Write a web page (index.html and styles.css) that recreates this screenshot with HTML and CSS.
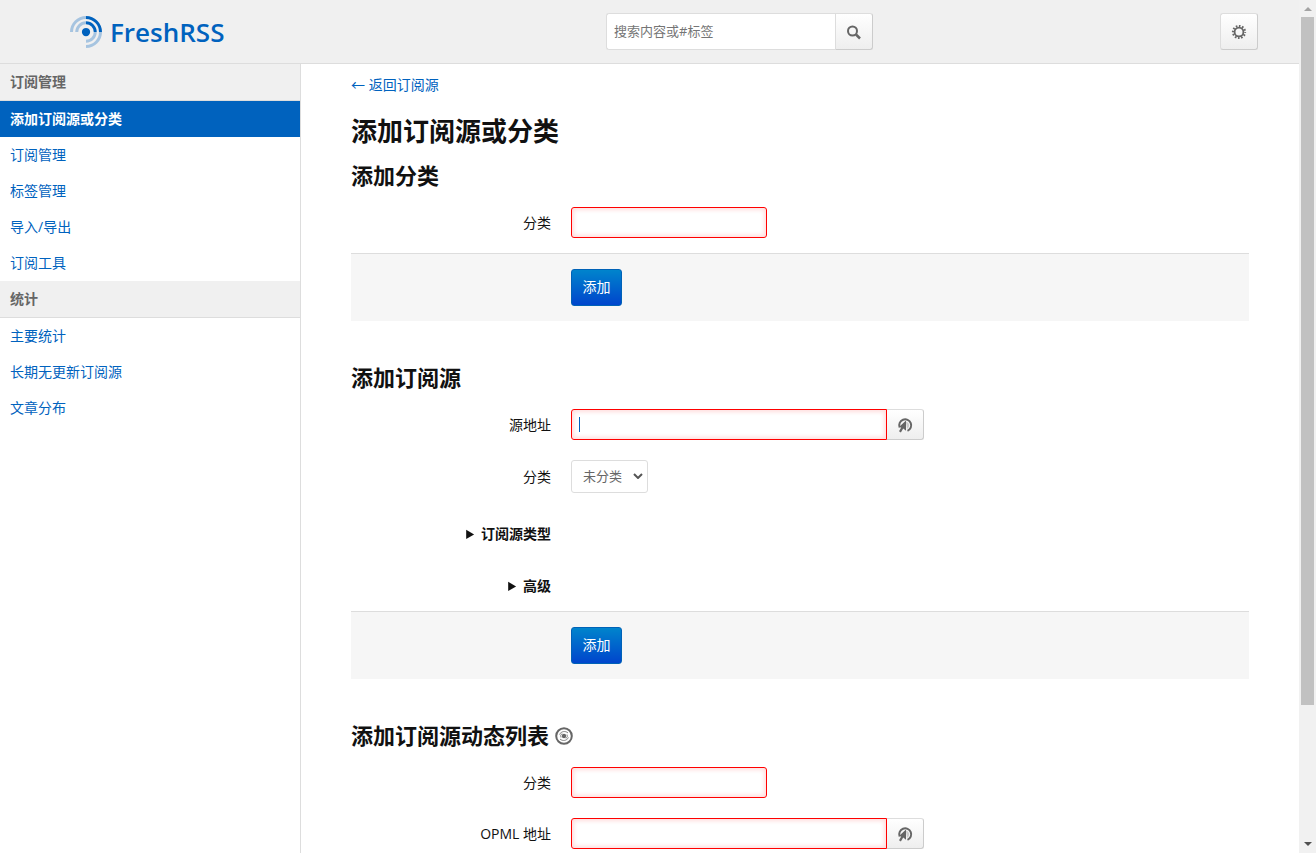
FILE: index.html
```html
<!DOCTYPE html>
<html lang="zh-CN">
<head>
    <meta charset="UTF-8">
    <meta name="viewport" content="width=device-width, initial-scale=1.0">
    <title>添加订阅源或分类 · FreshRSS</title>
    <link rel="stylesheet" href="styles.css">
</head>
<body>
    <div class="page">
        <header class="header">
            <a class="logo" href="#">
                <svg width="32" height="32" viewBox="0 0 256 256" fill="none" stroke="#0062be" stroke-width="24">
                    <circle cx="128" cy="128" r="33" fill="#0062be" stroke="none"/>
                    <g opacity="0.3">
                        <path d="M12 128A116 116 0 0 1 128 12"/>
                        <path d="M54 128A74 74 0 0 1 128 54"/>
                        <path d="M128 244A116 116 0 0 0 244 128"/>
                        <path d="M128 202A74 74 0 0 0 202 128"/>
                    </g>
                    <path d="M128 12A116 116 0 0 1 244 128"/>
                    <path d="M128 54A74 74 0 0 1 202 128"/>
                </svg>
                <span>FreshRSS</span>
            </a>
            <form class="search">
                <input type="search" placeholder="搜索内容或#标签" aria-label="搜索内容或#标签">
                <button type="button" class="btn" aria-label="搜索">
                    <svg width="16" height="16" viewBox="0 0 16 16" fill="none" stroke="#666" stroke-width="2">
                        <circle cx="6.5" cy="7" r="4.5"/>
                        <path d="M10 10.5l4 4" stroke-width="2.5"/>
                    </svg>
                </button>
            </form>
            <div class="configure">
                <button type="button" class="btn" aria-label="设置">
                    <svg width="16" height="16" viewBox="0 0 16 16" fill="none" stroke="#666">
                        <circle cx="8" cy="8" r="4.4" stroke-width="1.800"/>
                        <circle cx="8" cy="8" r="6" stroke-width="2.200" stroke-dasharray="1.600 1.540" stroke-dashoffset="0.800"/>
                    </svg>
                </button>
            </div>
        </header>

        <div class="content">
            <nav class="nav-list">
                <h2 class="nav-header">订阅管理</h2>
                <a class="item active" href="#">添加订阅源或分类</a>
                <a class="item" href="#">订阅管理</a>
                <a class="item" href="#">标签管理</a>
                <a class="item" href="#">导入/导出</a>
                <a class="item" href="#">订阅工具</a>
                <h2 class="nav-header">统计</h2>
                <a class="item" href="#">主要统计</a>
                <a class="item" href="#">长期无更新订阅源</a>
                <a class="item" href="#">文章分布</a>
            </nav>

            <main class="post">
                <a class="back" href="#">← 返回订阅源</a>
                <h1>添加订阅源或分类</h1>

                <h2>添加分类</h2>
                <form>
                    <div class="fields">
                        <div class="form-group">
                            <label for="new-category">分类</label>
                            <input id="new-category" class="invalid" type="text">
                        </div>
                    </div>
                    <div class="form-actions">
                        <button type="button" class="btn btn-important">添加</button>
                    </div>
                </form>

                <h2>添加订阅源</h2>
                <form>
                    <div class="fields">
                        <div class="form-group">
                            <label for="url_rss">源地址</label>
                            <div class="stick">
                                <input id="url_rss" class="invalid long" type="url">
                                <span class="caret"></span>
                                <button type="button" class="btn" aria-label="打开源地址">
                                    <svg width="16" height="16" viewBox="0 0 16 16">
                                        <path d="M2.600 10.500A6 6 0 1 1 10.500 13.900" fill="none" stroke="#666" stroke-width="2"/>
                                        <path d="M9 4.500a4 4 0 0 1 1 7.500z" fill="#ccc"/>
                                        <path d="M9 3.500L2 10l2.200.400L2 14.300l1.900 1.200 2.300-4 2.800 2.300z" fill="#666"/>
                                    </svg>
                                </button>
                            </div>
                        </div>
                        <div class="form-group">
                            <label for="category">分类</label>
                            <div class="select">
                                <select id="category">
                                    <option>未分类</option>
                                </select>
                                <svg width="10" height="6" viewBox="0 0 10 6" fill="none" stroke="#555" stroke-width="2">
                                    <path d="M1 1l4 4 4-4"/>
                                </svg>
                            </div>
                        </div>
                    </div>
                    <div class="details-list">
                        <details>
                            <summary>订阅源类型</summary>
                        </details>
                        <details>
                            <summary>高级</summary>
                        </details>
                    </div>
                    <div class="form-actions">
                        <button type="button" class="btn btn-important">添加</button>
                    </div>
                </form>

                <h2>添加订阅源动态列表
                    <svg width="18" height="18" viewBox="0 0 18 18" fill="none" stroke="#666">
                        <circle cx="9" cy="9" r="7.800" stroke-width="2"/>
                        <circle cx="9" cy="9" r="2.200" fill="#666" stroke="none"/>
                        <path d="M4.500 7.500C6 4.300 10.500 3.500 13 6M13.500 10.500C12 13.700 7.500 14.500 5 12M6 10.500a3.300 3.300 0 0 1 1-4M12 7.500a3.300 3.300 0 0 1-1 4" stroke-width="0.800"/>
                    </svg>
                </h2>
                <form>
                    <div class="fields">
                        <div class="form-group">
                            <label for="opml-category">分类</label>
                            <input id="opml-category" class="invalid" type="text">
                        </div>
                        <div class="form-group">
                            <label for="opml_url">OPML 地址</label>
                            <div class="stick">
                                <input id="opml_url" class="invalid long" type="url">
                                <button type="button" class="btn" aria-label="打开 OPML 地址">
                                    <svg width="16" height="16" viewBox="0 0 16 16">
                                        <path d="M2.600 10.500A6 6 0 1 1 10.500 13.900" fill="none" stroke="#666" stroke-width="2"/>
                                        <path d="M9 4.500a4 4 0 0 1 1 7.500z" fill="#ccc"/>
                                        <path d="M9 3.500L2 10l2.200.400L2 14.300l1.900 1.200 2.300-4 2.800 2.300z" fill="#666"/>
                                    </svg>
                                </button>
                            </div>
                        </div>
                    </div>
                </form>
            </main>
        </div>
    </div>

    <div class="scrollbar" aria-hidden="true">
        <svg width="17" height="17" viewBox="0 0 17 17"><path d="M5 11l4-4 4 4z" fill="#a3a3a3"/></svg>
        <div class="track"><div class="thumb"></div></div>
        <svg width="17" height="17" viewBox="0 0 17 17"><path d="M5 6l4 4 4-4z" fill="#505050"/></svg>
    </div>
</body>
</html>
```

FILE: styles.css
```css
* {
    box-sizing: border-box;
}

body {
    display: flex;
    height: 100vh;
    margin: 0;
    overflow: hidden;
    background-color: #fff;
    color: #111;
    font-family: "Open Sans", "Noto Sans CJK SC", sans-serif;
    font-size: 14px;
}

a {
    color: #0062be;
    text-decoration: none;
}

input,
select,
button {
    font-family: inherit;
    font-size: 14px;
}

.page {
    display: flex;
    flex-direction: column;
    flex: 1;
    min-width: 0;
}

/* Header */
.header {
    display: grid;
    grid-template-columns: 300px 1fr 120px;
    align-items: center;
    flex-shrink: 0;
    height: 64px;
    background-color: #f0f0f0;
    border-bottom: 1px solid #ddd;
}

.logo {
    display: flex;
    align-items: center;
    gap: 8px;
    padding-left: 70px;
    font-size: 26px;
    font-weight: 600;
    line-height: 32px;
}

.search {
    display: flex;
    justify-content: center;
}

.search input {
    width: 229px;
    height: 37px;
    padding: 0 7px 2px;
    border: 1px solid #ddd;
    border-right: 0;
    border-radius: 3px 0 0 3px;
    background-color: #fff;
    font-size: 13px;
}

.search input::placeholder {
    color: #757575;
}

.configure {
    text-align: center;
}

/* Buttons */
.btn {
    display: inline-flex;
    align-items: center;
    justify-content: center;
    min-width: 38px;
    height: 37px;
    padding: 0 10px;
    border: 1px solid #ddd;
    border-color: #ddd #ccc #ccc #ddd;
    border-radius: 3px;
    background: linear-gradient(#fff, #eee);
    vertical-align: middle;
}

.search .btn {
    border-radius: 0 3px 3px 0;
}

.btn-important {
    min-width: 51px;
    padding-bottom: 3px;
    border-color: #0062b7;
    background: linear-gradient(#0084cc, #0045cc);
    color: #fff;
}

/* Sidebar */
.content {
    display: flex;
    flex: 1;
    min-height: 0;
}

.nav-list {
    flex: 0 0 301px;
    border-right: 1px solid #ddd;
}

.nav-header,
.nav-list .item {
    display: block;
    margin: 0;
    padding: 0 10px;
    font-size: 14px;
    line-height: 36px;
}

.nav-header {
    background-color: #f0f0f0;
    border-bottom: 1px solid #ddd;
    color: #666;
    font-weight: 700;
}

.nav-list .active {
    background-color: #0062be;
    color: #fff;
    font-weight: 700;
}

/* Main column */
.post {
    flex: 1;
    min-width: 0;
    padding: 9px 50px 0;
    overflow: hidden;
}

.back {
    display: block;
    line-height: 24px;
}

h1 {
    margin: 16px 0 9px;
    font-size: 26px;
    line-height: 36px;
}

.post h2 {
    margin: 0 0 15px;
    font-size: 22px;
    line-height: 34px;
}

.post h2 svg {
    vertical-align: -1px;
}

/* Forms */
.fields {
    display: grid;
    gap: 20px;
    padding-bottom: 15px;
}

.form-group {
    display: flex;
    align-items: center;
    gap: 20px;
}

.form-group label {
    width: 200px;
    padding-bottom: 2px;
    text-align: right;
}

.invalid {
    width: 196px;
    height: 31px;
    padding: 0 7px;
    border: 1px solid #f00;
    border-radius: 3px;
    box-shadow: 0 0 4px 2px #fdd inset;
}

.stick {
    display: flex;
    position: relative;
}

.stick .long {
    width: 316px;
    border-radius: 3px 0 0 3px;
}

.stick .btn {
    width: 37px;
    min-width: 0;
    height: 31px;
    border-left: 0;
    border-radius: 0 3px 3px 0;
}

.caret {
    position: absolute;
    top: 8px;
    left: 8px;
    width: 1px;
    height: 15px;
    background-color: #0062be;
}

.select {
    position: relative;
}

.select select {
    appearance: none;
    width: 77px;
    height: 33px;
    padding: 0 11px 2px;
    border: 1px solid #ddd;
    border-radius: 3px;
    background-color: #fff;
    color: #666;
    font-size: 13px;
}

.select svg {
    position: absolute;
    top: 13px;
    right: 5px;
    pointer-events: none;
}

.details-list {
    display: grid;
    gap: 20px;
    padding: 10px 0 9px;
}

summary {
    width: 200px;
    font-weight: 700;
    line-height: 32px;
    text-align: right;
}

.form-actions {
    margin-bottom: 39px;
    padding: 15px 0 15px 220px;
    border-top: 1px solid #ddd;
    background-color: #f6f6f6;
}

.form-actions .btn {
    display: block;
}

/* Scrollbar */
.scrollbar {
    display: flex;
    flex-direction: column;
    flex: 0 0 17px;
    background-color: #f1f1f1;
}

.track {
    flex: 1;
    padding: 0 2px;
}

.thumb {
    height: 84%;
    background-color: #c1c1c1;
}
```
